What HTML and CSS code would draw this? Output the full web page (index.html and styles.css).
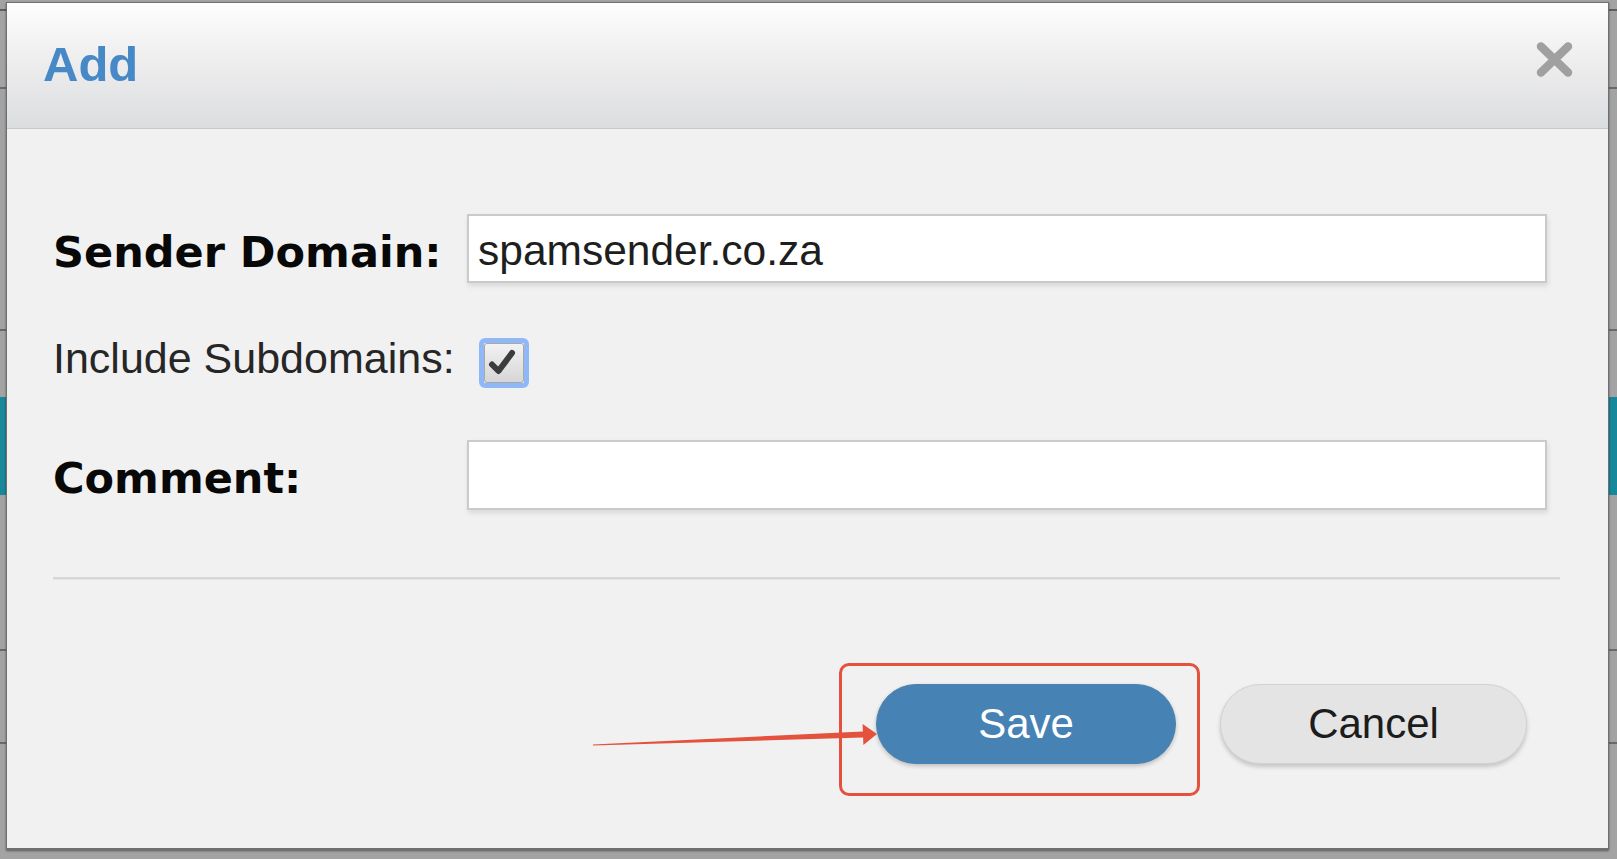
FILE: index.html
```html
<!DOCTYPE html>
<html lang="en">
<head>
<meta charset="utf-8">
<title>Add</title>
<link rel="stylesheet" href="styles.css">
</head>
<body>
<div class="screen">
  <div class="dialog">
    <div class="dialog-header">
      <h1 class="dialog-title">Add</h1>
      <button class="close-btn" type="button" aria-label="Close">
        <svg width="37" height="35" viewBox="0 0 37 35">
          <path d="M5 4.5 L32 30.5 M32 4.5 L5 30.5" stroke="#a0a0a0" stroke-width="8.5" stroke-linecap="round" fill="none"/>
        </svg>
      </button>
    </div>
    <div class="dialog-body">
      <div class="form-row row-domain">
        <label class="label label-bold" for="domain">Sender Domain:</label>
        <input class="text-input" id="domain" type="text" value="spamsender.co.za">
      </div>
      <div class="form-row row-check">
        <span class="label label-plain">Include Subdomains:</span>
        <span class="checkbox">
          <span class="checkbox-box">
            <svg width="40" height="40" viewBox="0 0 40 40">
              <path d="M8 21.5 L14.5 28 L28 10" stroke="#3c3c3c" stroke-width="6" stroke-linecap="round" stroke-linejoin="round" fill="none"/>
            </svg>
          </span>
        </span>
      </div>
      <div class="form-row row-comment">
        <label class="label label-bold" for="comment">Comment:</label>
        <input class="text-input" id="comment" type="text" value="">
      </div>
      <div class="separator"></div>
      <div class="button-row">
        <button class="btn btn-save" type="button">Save</button>
        <button class="btn btn-cancel" type="button">Cancel</button>
      </div>
    </div>
  </div>
  <div class="highlight-box"></div>
  <svg class="arrow" width="1617" height="859" viewBox="0 0 1617 859">
    <polygon points="593,745.6 863.1,737.6 863.4,745 877,734 862.6,724 862.9,731.4 593,744.4" fill="#e4513c"/>
  </svg>
</div>
</body>
</html>
```

FILE: styles.css
```css
html, body {
  margin: 0;
  padding: 0;
}

body {
  width: 1617px;
  height: 859px;
  overflow: hidden;
  font-family: "Liberation Sans", Arial, sans-serif;
  background:
    linear-gradient(to bottom,
      transparent 0, transparent 9px, #5e5e5e 9px, #5e5e5e 11px, transparent 11px,
      transparent 87px, #6a6a6a 87px, #6a6a6a 89px, transparent 89px,
      transparent 329px, #6a6a6a 329px, #6a6a6a 331px, transparent 331px,
      transparent 397px, #17879a 397px, #17879a 495px, transparent 495px,
      transparent 649px, #6a6a6a 649px, #6a6a6a 651px, transparent 651px,
      transparent 742px, #6a6a6a 742px, #6a6a6a 744px, transparent 744px),
    #a3a3a3;
}

.screen {
  position: relative;
  width: 1617px;
  height: 859px;
  box-sizing: border-box;
  padding: 2px 8px 9px 6px;
  display: flex;
}

.dialog {
  flex: 1;
  display: flex;
  flex-direction: column;
  background: #f1f1f1;
  border: 1px solid #707070;
  border-bottom-width: 2px;
  box-shadow: 0 1px 2px rgba(0, 0, 0, 0.45);
}

.dialog-header {
  height: 126px;
  box-sizing: border-box;
  flex: none;
  display: flex;
  align-items: center;
  justify-content: space-between;
  padding: 0 35px 3px 36px;
  background: linear-gradient(to bottom, #fdfdfd 0%, #eeeeef 45%, #dcdddf 100%);
  border-bottom: 1px solid #c8c8c8;
}

.dialog-title {
  margin: 0;
  font-family: "Liberation Sans", Arial, sans-serif;
  font-weight: bold;
  font-size: 49px;
  color: #4788c6;
  line-height: normal;
}

.close-btn {
  border: 0;
  padding: 0;
  margin: 0 0 9px 0;
  background: none;
  width: 37px;
  height: 35px;
  display: block;
}

.close-btn svg {
  display: block;
}

.dialog-body {
  flex: 1;
  padding: 85px 48px 0 46px;
  display: flex;
  flex-direction: column;
}

.form-row {
  display: flex;
  align-items: center;
  padding-right: 13px;
}

.row-domain {
  height: 69px;
}

.row-check {
  height: 50px;
  margin-top: 55px;
}

.row-comment {
  height: 70px;
  margin-top: 52px;
}

.label {
  flex: none;
  white-space: nowrap;
}

.label-bold {
  width: 414px;
  font-family: "DejaVu Sans", Verdana, sans-serif;
  font-weight: bold;
  font-size: 43px;
  color: #080808;
  margin-top: 6px;
}

.label-plain {
  font-family: "Liberation Sans", Arial, sans-serif;
  font-size: 43px;
  color: #262626;
  margin-bottom: 10px;
}

.text-input {
  flex: 1;
  min-width: 0;
  height: 100%;
  box-sizing: border-box;
  margin: 0;
  padding: 5px 0 0 9px;
  border: 2px solid #cacaca;
  background: #ffffff;
  box-shadow: 1px 3px 5px rgba(0, 0, 0, 0.10);
  font-family: "Liberation Sans", Arial, sans-serif;
  font-size: 42.5px;
  color: #1e1e1e;
  outline: none;
}

.checkbox {
  flex: none;
  width: 50px;
  height: 50px;
  margin-left: 24px;
  box-sizing: border-box;
  border: 5px solid #90b8f6;
  border-radius: 6px;
  padding: 0;
  display: flex;
}

.checkbox-box {
  flex: 1;
  display: flex;
  align-items: center;
  justify-content: center;
  box-sizing: border-box;
  border: 1px solid #a8a8a8;
  border-radius: 3px;
  background: linear-gradient(to bottom, #f2f2f2, #d6d6d6);
  overflow: hidden;
}

.checkbox-box svg {
  display: block;
  flex: none;
}

.separator {
  margin-top: 67px;
  height: 0;
  border-top: 2px solid #d6d6d6;
  border-bottom: 1px solid #e4e4e4;
}

.button-row {
  margin-top: 104px;
  display: flex;
  justify-content: flex-end;
  gap: 44px;
  padding-right: 33px;
}

.btn {
  height: 80px;
  border-radius: 40px;
  font-family: "Liberation Sans", Arial, sans-serif;
  font-size: 42px;
  padding: 0;
  margin: 0;
  cursor: pointer;
}

.btn-save {
  width: 300px;
  background: #4682b4;
  color: #ffffff;
  border: 1px solid #4a82b0;
  box-shadow: 0 2px 4px rgba(0, 0, 0, 0.22);
}

.btn-cancel {
  width: 307px;
  background: #e4e4e4;
  color: #1c1c1c;
  border: 1px solid #d2d2d2;
  box-shadow: 0 3px 4px rgba(0, 0, 0, 0.18);
}

.highlight-box {
  position: absolute;
  left: 839px;
  top: 663px;
  width: 361px;
  height: 133px;
  box-sizing: border-box;
  border: 3px solid #e4513c;
  border-radius: 10px;
  pointer-events: none;
}

.arrow {
  position: absolute;
  left: 0;
  top: 0;
  pointer-events: none;
}
```
